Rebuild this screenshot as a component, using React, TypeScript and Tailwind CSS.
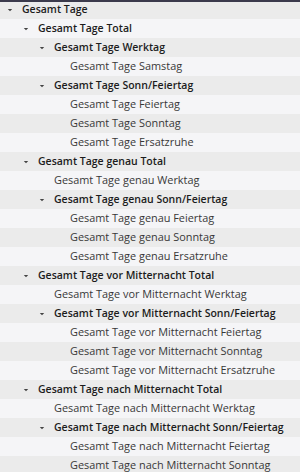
import React from 'react';

type Row = { label: string; level: number; open?: boolean };

const ROWS: Row[] = [
  { label: 'Gesamt Tage', level: 0, open: true },
  { label: 'Gesamt Tage Total', level: 1, open: true },
  { label: 'Gesamt Tage Werktag', level: 2, open: true },
  { label: 'Gesamt Tage Samstag', level: 3 },
  { label: 'Gesamt Tage Sonn/Feiertag', level: 2, open: true },
  { label: 'Gesamt Tage Feiertag', level: 3 },
  { label: 'Gesamt Tage Sonntag', level: 3 },
  { label: 'Gesamt Tage Ersatzruhe', level: 3 },
  { label: 'Gesamt Tage genau Total', level: 1, open: true },
  { label: 'Gesamt Tage genau Werktag', level: 2 },
  { label: 'Gesamt Tage genau Sonn/Feiertag', level: 2, open: true },
  { label: 'Gesamt Tage genau Feiertag', level: 3 },
  { label: 'Gesamt Tage genau Sonntag', level: 3 },
  { label: 'Gesamt Tage genau Ersatzruhe', level: 3 },
  { label: 'Gesamt Tage vor Mitternacht Total', level: 1, open: true },
  { label: 'Gesamt Tage vor Mitternacht Werktag', level: 2 },
  { label: 'Gesamt Tage vor Mitternacht Sonn/Feiertag', level: 2, open: true },
  { label: 'Gesamt Tage vor Mitternacht Feiertag', level: 3 },
  { label: 'Gesamt Tage vor Mitternacht Sonntag', level: 3 },
  { label: 'Gesamt Tage vor Mitternacht Ersatzruhe', level: 3 },
  { label: 'Gesamt Tage nach Mitternacht Total', level: 1, open: true },
  { label: 'Gesamt Tage nach Mitternacht Werktag', level: 2 },
  { label: 'Gesamt Tage nach Mitternacht Sonn/Feiertag', level: 2, open: true },
  { label: 'Gesamt Tage nach Mitternacht Feiertag', level: 3 },
  { label: 'Gesamt Tage nach Mitternacht Sonntag', level: 3 },
];

const PAD = ['pl-[6px]', 'pl-[22px]', 'pl-[38px]', 'pl-[54px]'];

function Caret() {
  return (
    <svg width="8" height="6" viewBox="0 0 8 6" className="shrink-0">
      <path d="M1.8 2 L6.2 2 L4 4.3 Z" fill="#444" />
    </svg>
  );
}

export default function App() {
  return (
    <div className="w-[300px] h-[472px] overflow-hidden bg-[#f5f5f7] font-['Open_Sans',sans-serif]">
      <div className="h-[2px] bg-[#3b3a4c]" />
      {ROWS.map((r, i) => (
        <div
          key={i}
          className={`flex items-center ${i === 0 ? 'h-[17px] pb-[2px]' : 'h-[19px]'} ${PAD[r.level]} ${
            i % 2 === 0 ? 'bg-[#ebebeb]' : 'bg-[#f5f5f7]'
          }`}
        >
          {r.open ? (
            <>
              <Caret />
              <span className="ml-[8px] text-[10.5px] font-semibold text-[#1c1c1c] whitespace-nowrap">{r.label}</span>
            </>
          ) : (
            <span className="ml-[16px] text-[10.9px] text-[#383838] whitespace-nowrap">{r.label}</span>
          )}
        </div>
      ))}
    </div>
  );
}
